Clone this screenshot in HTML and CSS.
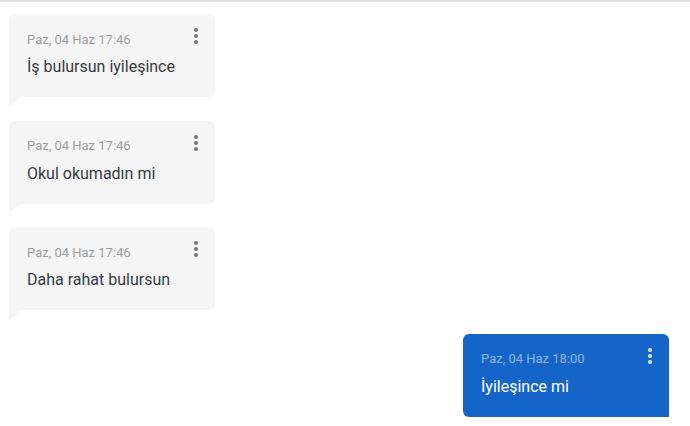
FILE: index.html
```html
<!DOCTYPE html>
<html lang="tr">

<head>
    <meta charset="UTF-8">
    <meta name="viewport" content="width=device-width, initial-scale=1.0">
    <title>Mesajlar</title>
    <link rel="stylesheet" href="styles.css">
</head>

<body>
    <div class="chat">
        <div class="message incoming">
            <div class="message-head">
                <span class="message-date">Paz, 04 Haz 17:46</span>
                <span class="menu"><i></i><i></i><i></i></span>
            </div>
            <div class="message-text">İş bulursun iyileşince</div>
        </div>

        <div class="message incoming">
            <div class="message-head">
                <span class="message-date">Paz, 04 Haz 17:46</span>
                <span class="menu"><i></i><i></i><i></i></span>
            </div>
            <div class="message-text">Okul okumadın mi</div>
        </div>

        <div class="message incoming">
            <div class="message-head">
                <span class="message-date">Paz, 04 Haz 17:46</span>
                <span class="menu"><i></i><i></i><i></i></span>
            </div>
            <div class="message-text">Daha rahat bulursun</div>
        </div>

        <div class="message outgoing">
            <div class="message-head">
                <span class="message-date">Paz, 04 Haz 18:00</span>
                <span class="menu"><i></i><i></i><i></i></span>
            </div>
            <div class="message-text">İyileşince mi</div>
        </div>
    </div>
</body>

</html>
```

FILE: styles.css
```css
body {
    font-family: Roboto, "Noto Sans", Arial, sans-serif;
    margin: 0;
    background-color: #fff;
    border-top: 2px solid #e2e2e2;
}

.chat {
    display: flex;
    flex-direction: column;
    gap: 23.5px;
    padding: 12px 21px 0 9px;
}

.message {
    position: relative;
    width: 206px;
    box-sizing: border-box;
    padding: 16px 17px 19px 18px;
    border-radius: 6px;
    background-color: #f5f5f5;
    color: #363b42;
}

.message::after {
    content: "";
    position: absolute;
    top: 100%;
    width: 12px;
    height: 10px;
    background-color: inherit;
}

.incoming {
    align-self: flex-start;
    border-bottom-left-radius: 0;
}

.incoming::after {
    left: 0;
    clip-path: polygon(0 0, 100% 0, 0 100%);
}

.outgoing {
    align-self: flex-end;
    background-color: #1565c8;
    color: #fff;
    border-bottom-right-radius: 0;
}

.outgoing::after {
    right: 0;
    width: 15px;
    height: 11px;
    clip-path: polygon(0 0, 100% 0, 100% 100%);
}

.message-head {
    display: flex;
    justify-content: space-between;
    align-items: center;
    height: 18px;
}

.message-date {
    font-size: 13px;
    color: #9e9e9e;
}

.outgoing .message-date {
    color: #8fb6ea;
}

.menu {
    display: flex;
    flex-direction: column;
    gap: 2px;
    margin-top: -6px;
}

.menu i {
    display: block;
    width: 4px;
    height: 4px;
    border-radius: 50%;
    background-color: #757575;
}

.outgoing .menu i {
    background-color: #dce8f8;
}

.message-text {
    margin-top: 8px;
    font-size: 16px;
    line-height: 22px;
}
```
